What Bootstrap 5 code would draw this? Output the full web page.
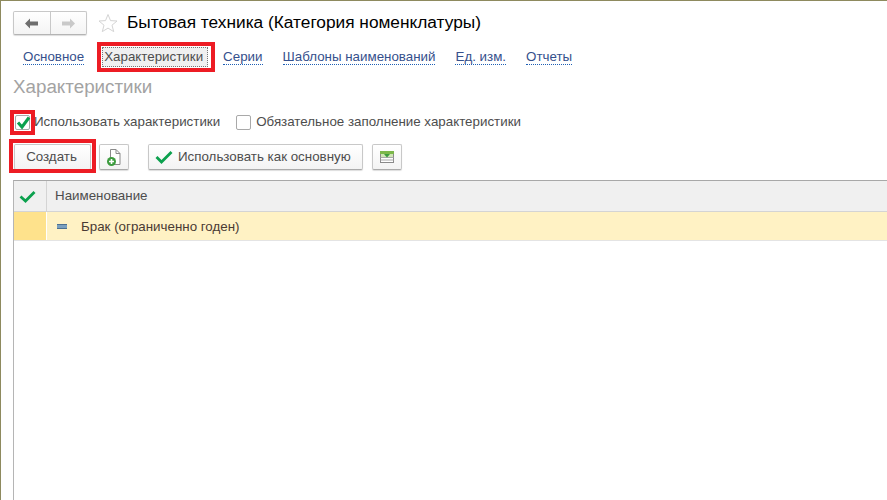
<!DOCTYPE html>
<html lang="ru">
<head>
<meta charset="utf-8">
<title>Бытовая техника</title>
<link href="https://cdn.jsdelivr.net/npm/bootstrap@5.3.0/dist/css/bootstrap.min.css" rel="stylesheet">
<style>
html,body{height:100%;overflow:hidden}
body{font-family:"Liberation Sans",Arial,sans-serif;font-size:13.35px;color:#4d4d4d;background:#fff}
.frame{height:500px;width:887px;border-left:1px solid #8e8a5e;border-top:1px solid #8e8a5e;padding:10px 0 0 12px;overflow:hidden}
.navgroup{width:74px;height:24px;border:1px solid #c8c8c8;border-bottom-color:#b4b4b4;border-radius:2px;background:linear-gradient(#fff,#f4f4f4);box-shadow:0 1px 1px #ddd}
.navcell{flex:1;display:flex;align-items:center;justify-content:center}
.navcell+.navcell{border-left:1px solid #c8c8c8}
.titletext{font-size:17.3px;color:#000;margin-left:9px;line-height:23px;height:24px;white-space:nowrap}
.starbox{margin-left:11px;line-height:0}
.tabs{margin-top:11px;height:22px;padding-left:10px;gap:20px}
.tablink{color:#35508c;border-bottom:1px dotted #1f5fb4;line-height:15px;height:16px;white-space:nowrap}
.tabactive{position:relative;color:#4d4d4d;background:#f0f0f0;border:1px dotted #777;line-height:18px;height:20px;padding:0 4px 0 1px;margin:0 -5px 0 -2px;white-space:nowrap}
.redbox{position:absolute;border:4px solid #ed1c24;pointer-events:none}
.rb-tab{left:-6px;top:-6px;width:118px;height:30px}
.heading{font-size:18.8px;color:#a3a3a3;line-height:22px;margin-top:8px}
.checks{margin-top:13px;height:22px;line-height:22px}
.chk{position:relative;width:15px;height:15px;border:1px solid #a9a9a9;border-radius:2px;background:#fff;margin-left:2px;flex:none}
.rb-chk{left:-6px;top:-6px;width:25px;height:25px}
.lbl1{margin-left:4px;margin-right:16px}
.lbl2{margin-left:5px}
.chk2{margin-left:0}
.toolbar{margin-top:11px;height:26px;position:relative}
.tbtn{height:26px;border:1px solid #c8c8c8;border-bottom-color:#aaa;border-radius:2px;background:linear-gradient(#fff,#f3f3f3);box-shadow:0 1px 1px #ddd;display:flex;align-items:center;justify-content:center;white-space:nowrap;color:#4d4d4d}
.tcreate{position:relative;width:77px;margin-left:1px;padding-right:2px}
.rb-create{left:-6px;top:-6px;width:87px;height:34px}
.ticon{width:30px}
.ticon1{margin-left:8px}
.tmain{width:215px;gap:5px;margin-left:19px;justify-content:flex-start;padding-left:6px}
.ticon2{margin-left:9px}
.gridwrap{margin-top:10px;border-left:1px solid #b5b5b5;border-top:1px solid #a8a8a8;height:320px}
.ghead{height:31px;background:#f0f0f0;border-bottom:1px solid #d4d4d4;display:flex}
.gcheck{width:33px;flex:none;border-right:1px solid #d4d4d4;display:flex;align-items:center;justify-content:center;padding-right:6px}
.gname{padding-left:8px;line-height:29px;color:#4d4d4d}
.grow{height:29px;display:flex;background:#fff2c4;border-bottom:1px solid #e4e4e4}
.gmark{width:33px;flex:none;background:#fee28c;border-right:1px solid #fff}
.gcell{padding-left:10px;display:flex;align-items:center;line-height:27px;color:#4a3b34}
.dash{width:10px;height:5px;background:#7ba0bf;border-top:1px solid #4d7191;border-bottom:1px solid #4d7191;margin-right:14px}
</style>
</head>
<body>
<div class="frame">
  <div class="d-flex align-items-center">
    <div class="navgroup d-flex">
      <div class="navcell"><svg width="15" height="11" viewBox="0 0 15 11"><path d="M6 0.5 L1 5.5 L6 10.5 V7.5 H14 V3.5 H6 Z" fill="#6e6e6e"/></svg></div>
      <div class="navcell"><svg width="15" height="11" viewBox="0 0 15 11"><path d="M9 0.5 L14 5.5 L9 10.5 V7.5 H1 V3.5 H9 Z" fill="#c9c9c9"/></svg></div>
    </div>
    <div class="starbox"><svg width="20" height="20" viewBox="0 0 20 20"><path d="M10 1.5 L12.5 7.6 L19 8 L14 12.2 L15.7 18.6 L10 15.1 L4.3 18.6 L6 12.2 L1 8 L7.5 7.6 Z" fill="#fff" stroke="#d4d4d4"/></svg></div>
    <div class="titletext">Бытовая техника (Категория номенклатуры)</div>
  </div>
  <div class="tabs d-flex align-items-center">
    <span class="tablink">Основное</span>
    <span class="tabactive">Характеристики<span class="redbox rb-tab"></span></span>
    <span class="tablink">Серии</span>
    <span class="tablink">Шаблоны наименований</span>
    <span class="tablink">Ед. изм.</span>
    <span class="tablink">Отчеты</span>
  </div>
  <div class="heading">Характеристики</div>
  <div class="checks d-flex align-items-center">
    <span class="chk"><svg class="d-block" width="15" height="14" viewBox="0 0 15 14"><path d="M2 6.5 L6 11 L13 1.5" fill="none" stroke="#0ca14e" stroke-width="3"/></svg><span class="redbox rb-chk"></span></span>
    <span class="lbl1">Использовать характеристики</span>
    <span class="chk chk2"></span>
    <span class="lbl2">Обязательное заполнение характеристики</span>
  </div>
  <div class="toolbar d-flex">
    <div class="tbtn tcreate">Создать<span class="redbox rb-create"></span></div>
    <div class="tbtn ticon ticon1"><svg width="16" height="19" viewBox="0 0 16 19"><path d="M4.5 1.5 H10 L14 5.5 V16.5 H4.5 Z" fill="#fff" stroke="#8a8a8a"/><path d="M10 1.5 V5.5 H14" fill="none" stroke="#8a8a8a"/><circle cx="5.5" cy="13.5" r="4.5" fill="#3d9c3f"/><path d="M5.5 11 V16 M3 13.5 H8" stroke="#fff" stroke-width="1.6"/></svg></div>
    <div class="tbtn tmain"><svg width="18" height="14" viewBox="0 0 18 14"><path d="M1.5 7 L6.5 12 L16.5 2" fill="none" stroke="#0ca14e" stroke-width="2.8"/></svg>Использовать как основную</div>
    <div class="tbtn ticon ticon2"><svg width="16" height="14" viewBox="0 0 16 14"><rect x="1.5" y="1.5" width="13" height="11" fill="#fff" stroke="#8a8a8a"/><rect x="1" y="1" width="14" height="3" fill="#7cb84a"/><rect x="2" y="4" width="12" height="3" fill="#cfe6b4"/><path d="M1.5 7.5 H14.5 M1.5 10 H14.5" stroke="#a8a8a8"/><path d="M5 4 H11 L8 7.5 Z" fill="#3d9c3f"/></svg></div>
  </div>
  <div class="gridwrap">
    <div class="ghead">
      <div class="gcheck"><svg width="17" height="13" viewBox="0 0 17 13"><path d="M1.5 6.5 L6.5 11 L15.5 2" fill="none" stroke="#0ca14e" stroke-width="2.8"/></svg></div>
      <div class="gname">Наименование</div>
    </div>
    <div class="grow">
      <div class="gmark"></div>
      <div class="gcell"><span class="dash"></span>Брак (ограниченно годен)</div>
    </div>
  </div>
</div>
</body>
</html>
